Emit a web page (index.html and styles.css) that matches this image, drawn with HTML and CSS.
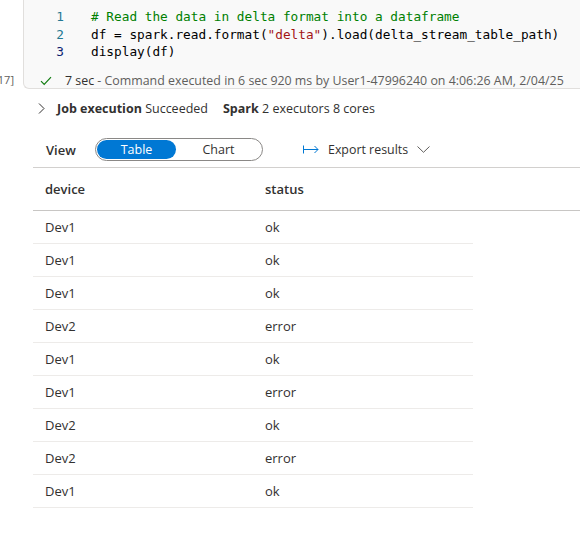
FILE: index.html
```html
<!DOCTYPE html>
<html>
<head>
<meta charset="utf-8">
<link rel="stylesheet" href="styles.css">
</head>
<body>
<div class="cell-row">
  <div class="gutter">[17]</div>
  <div class="cell">
    <div class="code">
      <div class="ln">1</div><div class="src"><span class="cm"># Read the data in delta format into a dataframe</span></div>
      <div class="ln">2</div><div class="src">df = spark.read.format(<span class="str">"delta"</span>).load(delta_stream_table_path)</div>
      <div class="ln cur">3</div><div class="src">display(df)</div>
    </div>
    <div class="status">
      <svg class="check" width="12" height="10" viewBox="0 0 12 10"><path d="M1 5.2 L4.2 8.4 L11 1.2" fill="none" stroke="#107c10" stroke-width="1.2"/></svg>
      <span class="sec">7 sec</span><span class="meta">&nbsp;- Command executed in 6 sec 920 ms by User1-47996240 on 4:06:26 AM, 2/04/25</span>
    </div>
  </div>
</div>

<div class="job">
  <svg class="chev" width="7" height="11" viewBox="0 0 7 11"><path d="M1 0.5 L6 5.5 L1 10.5" fill="none" stroke="#323130" stroke-width="1"/></svg>
  <b>Job execution</b>&nbsp;<span>Succeeded</span>
  <b class="spark">Spark</b>&nbsp;<span>2 executors 8 cores</span>
</div>

<div class="viewbar">
  <span class="view-label">View</span>
  <div class="toggle">
    <span class="opt on">Table</span>
    <span class="opt">Chart</span>
  </div>
  <div class="export">
    <svg width="16" height="9" viewBox="0 0 16 9"><path d="M0.5 0.5 V8.5 M0.5 4.5 H15 M11.5 1 L15 4.5 L11.5 8" fill="none" stroke="#0078d4" stroke-width="1"/></svg>
    <span>Export results</span>
    <svg class="down" width="13" height="7" viewBox="0 0 13 7"><path d="M0.5 0.5 L6.5 6.3 L12.5 0.5" fill="none" stroke="#605e5c" stroke-width="1"/></svg>
  </div>
</div>

<div class="table">
  <div class="thead">
    <div class="c1">device</div><div class="c2">status</div>
  </div>
  <div class="tr"><div class="c1">Dev1</div><div class="c2">ok</div></div>
  <div class="tr"><div class="c1">Dev1</div><div class="c2">ok</div></div>
  <div class="tr"><div class="c1">Dev1</div><div class="c2">ok</div></div>
  <div class="tr"><div class="c1">Dev2</div><div class="c2">error</div></div>
  <div class="tr"><div class="c1">Dev1</div><div class="c2">ok</div></div>
  <div class="tr"><div class="c1">Dev1</div><div class="c2">error</div></div>
  <div class="tr"><div class="c1">Dev2</div><div class="c2">ok</div></div>
  <div class="tr"><div class="c1">Dev2</div><div class="c2">error</div></div>
  <div class="tr"><div class="c1">Dev1</div><div class="c2">ok</div></div>
</div>
</body>
</html>
```

FILE: styles.css
```css
html, body {
  margin: 0;
  padding: 0;
  background: #ffffff;
  overflow: hidden;
}
body {
  font-family: "Open Sans", "Noto Sans", sans-serif;
  color: #323130;
  width: 580px;
  height: 533px;
}
.cell-row {
  display: flex;
  align-items: flex-end;
}
.gutter {
  width: 23px;
  flex: none;
  display: flex;
  justify-content: flex-end;
  padding-right: 9px;
  box-sizing: border-box;
  font-size: 11px;
  color: #605e5c;
  line-height: 16px;
  padding-bottom: 1px;
  white-space: nowrap;
}
.cell {
  flex: 1;
  background: #f9f9f9;
  border-left: 1px solid #e1dfdd;
  border-bottom: 1px solid #e1dfdd;
  border-bottom-left-radius: 6px;
  height: 89px;
  box-sizing: border-box;
  padding-top: 8px;
}
.code {
  display: grid;
  grid-template-columns: 40px 1fr;
  column-gap: 27px;
  font-family: "DejaVu Sans Mono", "Liberation Mono", monospace;
  font-size: 12.75px;
  line-height: 17.5px;
  color: #000000;
  white-space: pre;
}
.ln {
  text-align: right;
  color: #237893;
}
.ln.cur {
  color: #0b216f;
}
.cm { color: #008000; }
.str { color: #a31515; }
.status {
  display: flex;
  align-items: center;
  margin-top: 12px;
  padding-left: 16px;
  font-size: 12.4px;
  color: #605e5c;
  white-space: nowrap;
  height: 16px;
}
.check {
  margin-right: 13px;
}
.sec {
  color: #323130;
}
.job {
  display: flex;
  align-items: center;
  height: 20px;
  margin-top: 9px;
  padding-left: 38px;
  font-size: 12.5px;
  white-space: nowrap;
}
.chev {
  margin-right: 12px;
}
.job b {
  font-weight: 700;
}
.spark {
  margin-left: 15px;
}
.viewbar {
  display: flex;
  align-items: center;
  margin-left: 33px;
  margin-top: 14px;
  height: 35px;
  border-bottom: 1px solid #d2d0ce;
  font-size: 13px;
}
.view-label {
  margin-left: 13px;
  width: 49px;
  font-weight: 600;
}
.toggle {
  display: flex;
  align-items: center;
  width: 168px;
  height: 23px;
  box-sizing: border-box;
  border: 1px solid #8a8886;
  border-radius: 12px;
  padding: 1px;
}
.opt {
  flex: 1;
  height: 19px;
  line-height: 19px;
  text-align: center;
  font-size: 12.5px;
  border-radius: 10px;
}
.opt.on {
  flex: none;
  width: 79px;
  background: #0078d4;
  color: #ffffff;
}
.export {
  display: flex;
  align-items: center;
  margin-left: 40px;
  font-size: 12.4px;
}
.export span {
  margin-left: 9px;
}
.export .down {
  margin-left: 9px;
}
.table {
  margin-left: 33px;
  font-size: 13px;
}
.thead {
  display: flex;
  align-items: center;
  height: 42px;
  border-bottom: 1px solid #c8c6c4;
  font-weight: 600;
}
.tr {
  display: flex;
  align-items: center;
  width: 440px;
  height: 32px;
  border-bottom: 1px solid #edebe9;
}
.c1 {
  width: 232px;
  padding-left: 12px;
  box-sizing: border-box;
}
.c2 {
  flex: 1;
}
```
